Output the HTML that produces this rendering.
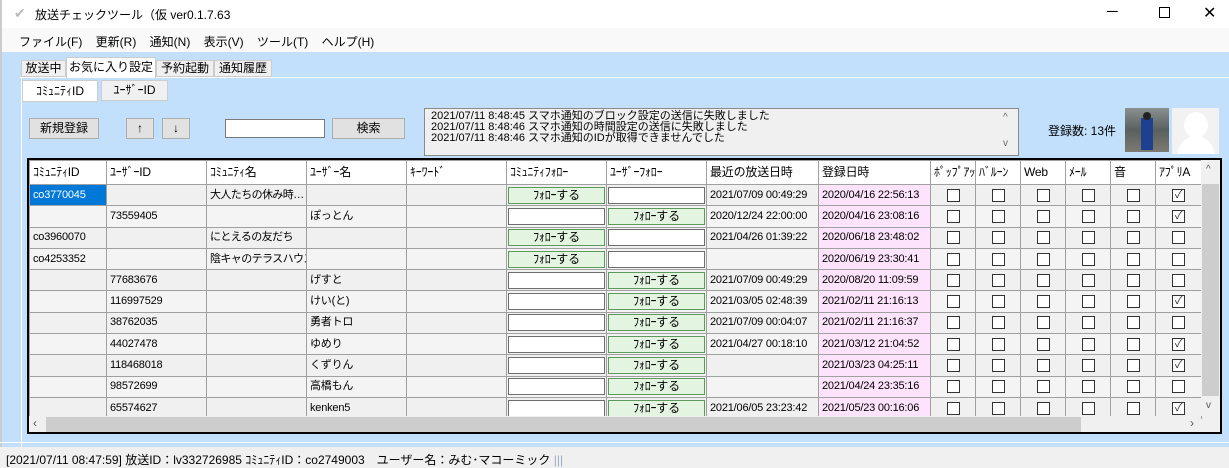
<!DOCTYPE html>
<html><head><meta charset="utf-8"><style>
*{box-sizing:border-box;margin:0;padding:0}
body{width:1229px;height:468px;overflow:hidden;background:#c2e0fc;font-family:"Liberation Sans","Noto Sans CJK JP",sans-serif;font-size:12px;color:#000;position:relative}
.a{position:absolute;white-space:nowrap}
.btn{position:absolute;background:#e1e1e1;border:1px solid #adadad;text-align:center;font-size:12px;line-height:19px}
table{border-collapse:collapse;table-layout:fixed;position:absolute;left:29px;top:160px;width:1172px}
td{border:1px solid #a0a0a0;height:21.3px;padding:0 3px;white-space:nowrap;overflow:hidden;font-size:11px;line-height:19px;vertical-align:middle;font-family:"Liberation Sans","Noto Sans CJK JP",sans-serif;letter-spacing:-0.2px}
tr.h td{height:24px;font-size:12px;background:#fff}
tr:nth-child(odd):not(.h) td{background:#f4f4f4}
td.p{background:#fde3fb!important}
td.n{letter-spacing:-0.6px}
.gb{display:block;height:17px;border:1px solid #5c9a5c;background:#e3f5e1;text-align:center;line-height:15px;font-size:12px}
.wb{display:block;height:17px;border:1px solid #6e6e6e;background:#fff}
.cb{display:block;width:13px;height:13px;border:1px solid #333;margin:0 auto;background:#fff;font-size:11px;line-height:11px;text-align:center;color:#333;font-style:normal}
td.c{padding:0 1px}
</style></head><body>
<div class="a" style="left:0;top:0;width:1229px;height:28px;background:#fff"></div>
<div class="a" style="left:14px;top:5px;font-size:14px;color:#bbb">✔</div>
<div class="a" style="left:35px;top:6px;font-size:12px">放送チェックツール（仮 ver0.1.7.63</div>
<div class="a" style="left:1107px;top:3px;font-size:15px">─</div>
<div class="a" style="left:1159px;top:7px;width:11px;height:11px;border:1px solid #000"></div>
<div class="a" style="left:1203px;top:3px;font-size:16px">✕</div>
<div class="a" style="left:0;top:28px;width:1229px;height:24px;background:#f9f9f9"></div>
<div class="a" style="left:19px;top:33px;font-size:12px">ファイル(F)&nbsp;&nbsp;&nbsp;&nbsp;更新(R)&nbsp;&nbsp;&nbsp;&nbsp;通知(N)&nbsp;&nbsp;&nbsp;&nbsp;表示(V)&nbsp;&nbsp;&nbsp;&nbsp;ツール(T)&nbsp;&nbsp;&nbsp;&nbsp;ヘルプ(H)</div>
<div class="a" style="left:0;top:0;width:2px;height:468px;background:#ccc"></div>
<div class="a" style="left:20px;top:77px;width:1209px;height:1px;background:#fff"></div>
<div class="a" style="left:21px;top:60px;width:45px;height:17px;background:#f0f0f0;border:1px solid #ccc;text-align:center;line-height:15px">放送中</div>
<div class="a" style="left:66px;top:57px;width:90px;height:21px;background:#fff;border:1px solid #ccc;border-bottom:none;text-align:center;line-height:18px">お気に入り設定</div>
<div class="a" style="left:156px;top:60px;width:58px;height:17px;background:#f0f0f0;border:1px solid #ccc;text-align:center;line-height:15px">予約起動</div>
<div class="a" style="left:214px;top:60px;width:58px;height:17px;background:#f0f0f0;border:1px solid #ccc;text-align:center;line-height:15px">通知履歴</div>
<div class="a" style="left:21px;top:78px;width:1px;height:370px;background:#fff"></div>
<div class="a" style="left:22px;top:80px;width:76px;height:22px;background:#fff;border:1px solid #ccc;text-align:center;line-height:20px;font-size:12px">ｺﾐｭﾆﾃｨID</div>
<div class="a" style="left:101px;top:80px;width:67px;height:21px;background:#f0f0f0;border:1px solid #ccc;text-align:center;line-height:19px;font-size:12px">ﾕｰｻﾞｰID</div>
<div class="btn" style="left:29px;top:118px;width:70px;height:21px">新規登録</div>
<div class="btn" style="left:126px;top:118px;width:28px;height:21px">↑</div>
<div class="btn" style="left:162px;top:118px;width:28px;height:21px">↓</div>
<div class="a" style="left:225px;top:119px;width:100px;height:19px;background:#fff;border:1px solid #7a7a7a"></div>
<div class="btn" style="left:332px;top:118px;width:73px;height:21px">検索</div>
<div class="a" style="left:424px;top:108px;width:595px;height:48px;background:#f0f0f0;border:1px solid #8a8a8a;padding:2px 0 0 6px;font-size:11px;line-height:11px">2021/07/11 8:48:45 スマホ通知のブロック設定の送信に失敗しました<br>2021/07/11 8:48:46 スマホ通知の時間設定の送信に失敗しました<br>2021/07/11 8:48:46 スマホ通知のIDが取得できませんでした</div>
<div class="a" style="left:1003px;top:112px;font-size:10px;color:#666">^</div>
<div class="a" style="left:1003px;top:138px;font-size:10px;color:#666">v</div>
<div class="a" style="left:1048px;top:122px;font-size:12px">登録数: 13件</div>
<div class="a" style="left:1125px;top:108px;width:44px;height:44px;background:linear-gradient(#8a8f8f,#5a6060 50%,#7c7a70)"></div>
<div class="a" style="left:1141px;top:118px;width:12px;height:32px;background:#1f3f8f"></div>
<div class="a" style="left:1143px;top:112px;width:8px;height:8px;background:#222;border-radius:50%"></div>
<div class="a" style="left:1172px;top:108px;width:47px;height:46px;background:#f2f2f2;overflow:hidden"><div style="position:absolute;left:12px;top:4px;width:24px;height:26px;background:#fff;border-radius:50%"></div><div style="position:absolute;left:6px;top:28px;width:36px;height:20px;background:#fff;border-radius:18px 18px 0 0"></div></div>
<div class="a" style="left:27px;top:158px;width:1195px;height:276px;background:#f0f0f0;border:2px solid #000"></div>
<table>
<colgroup><col style="width:77px"><col style="width:100px"><col style="width:100px"><col style="width:100px"><col style="width:100px"><col style="width:100px"><col style="width:100px"><col style="width:112px"><col style="width:112px"><col style="width:45px"><col style="width:45px"><col style="width:45px"><col style="width:45px"><col style="width:45px"><col style="width:46px"></colgroup>
<tr class="h"><td>ｺﾐｭﾆﾃｨID</td><td>ﾕｰｻﾞｰID</td><td>ｺﾐｭﾆﾃｨ名</td><td>ﾕｰｻﾞｰ名</td><td>ｷｰﾜｰﾄﾞ</td><td>ｺﾐｭﾆﾃｨﾌｫﾛｰ</td><td>ﾕｰｻﾞｰﾌｫﾛｰ</td><td>最近の放送日時</td><td>登録日時</td><td>ﾎﾟｯﾌﾟｱｯﾌﾟ</td><td>ﾊﾞﾙｰﾝ</td><td>Web</td><td>ﾒｰﾙ</td><td>音</td><td>ｱﾌﾟﾘA</td></tr>
<tr><td style="background:#0078d7;color:#fff">co3770045</td><td></td><td class="n">大人たちの休み時…</td><td></td><td></td><td class="c"><span class="gb">ﾌｫﾛｰする</span></td><td class="c"><span class="wb"></span></td><td>2021/07/09 00:49:29</td><td class="p">2020/04/16 22:56:13</td><td><i class="cb"></i></td><td><i class="cb"></i></td><td><i class="cb"></i></td><td><i class="cb"></i></td><td><i class="cb"></i></td><td><i class="cb">✓</i></td></tr>
<tr><td></td><td>73559405</td><td></td><td>ぽっとん</td><td></td><td class="c"><span class="wb"></span></td><td class="c"><span class="gb">ﾌｫﾛｰする</span></td><td>2020/12/24 22:00:00</td><td class="p">2020/04/16 23:08:16</td><td><i class="cb"></i></td><td><i class="cb"></i></td><td><i class="cb"></i></td><td><i class="cb"></i></td><td><i class="cb"></i></td><td><i class="cb">✓</i></td></tr>
<tr><td>co3960070</td><td></td><td class="n">にとえるの友だち</td><td></td><td></td><td class="c"><span class="gb">ﾌｫﾛｰする</span></td><td class="c"><span class="wb"></span></td><td>2021/04/26 01:39:22</td><td class="p">2020/06/18 23:48:02</td><td><i class="cb"></i></td><td><i class="cb"></i></td><td><i class="cb"></i></td><td><i class="cb"></i></td><td><i class="cb"></i></td><td><i class="cb"></i></td></tr>
<tr><td>co4253352</td><td></td><td class="n">陰キャのテラスハウス</td><td></td><td></td><td class="c"><span class="gb">ﾌｫﾛｰする</span></td><td class="c"><span class="wb"></span></td><td></td><td class="p">2020/06/19 23:30:41</td><td><i class="cb"></i></td><td><i class="cb"></i></td><td><i class="cb"></i></td><td><i class="cb"></i></td><td><i class="cb"></i></td><td><i class="cb"></i></td></tr>
<tr><td></td><td>77683676</td><td></td><td>げすと</td><td></td><td class="c"><span class="wb"></span></td><td class="c"><span class="gb">ﾌｫﾛｰする</span></td><td>2021/07/09 00:49:29</td><td class="p">2020/08/20 11:09:59</td><td><i class="cb"></i></td><td><i class="cb"></i></td><td><i class="cb"></i></td><td><i class="cb"></i></td><td><i class="cb"></i></td><td><i class="cb"></i></td></tr>
<tr><td></td><td>116997529</td><td></td><td>けい(と)</td><td></td><td class="c"><span class="wb"></span></td><td class="c"><span class="gb">ﾌｫﾛｰする</span></td><td>2021/03/05 02:48:39</td><td class="p">2021/02/11 21:16:13</td><td><i class="cb"></i></td><td><i class="cb"></i></td><td><i class="cb"></i></td><td><i class="cb"></i></td><td><i class="cb"></i></td><td><i class="cb">✓</i></td></tr>
<tr><td></td><td>38762035</td><td></td><td>勇者トロ</td><td></td><td class="c"><span class="wb"></span></td><td class="c"><span class="gb">ﾌｫﾛｰする</span></td><td>2021/07/09 00:04:07</td><td class="p">2021/02/11 21:16:37</td><td><i class="cb"></i></td><td><i class="cb"></i></td><td><i class="cb"></i></td><td><i class="cb"></i></td><td><i class="cb"></i></td><td><i class="cb"></i></td></tr>
<tr><td></td><td>44027478</td><td></td><td>ゆめり</td><td></td><td class="c"><span class="wb"></span></td><td class="c"><span class="gb">ﾌｫﾛｰする</span></td><td>2021/04/27 00:18:10</td><td class="p">2021/03/12 21:04:52</td><td><i class="cb"></i></td><td><i class="cb"></i></td><td><i class="cb"></i></td><td><i class="cb"></i></td><td><i class="cb"></i></td><td><i class="cb">✓</i></td></tr>
<tr><td></td><td>118468018</td><td></td><td>くずりん</td><td></td><td class="c"><span class="wb"></span></td><td class="c"><span class="gb">ﾌｫﾛｰする</span></td><td></td><td class="p">2021/03/23 04:25:11</td><td><i class="cb"></i></td><td><i class="cb"></i></td><td><i class="cb"></i></td><td><i class="cb"></i></td><td><i class="cb"></i></td><td><i class="cb">✓</i></td></tr>
<tr><td></td><td>98572699</td><td></td><td>高橋もん</td><td></td><td class="c"><span class="wb"></span></td><td class="c"><span class="gb">ﾌｫﾛｰする</span></td><td></td><td class="p">2021/04/24 23:35:16</td><td><i class="cb"></i></td><td><i class="cb"></i></td><td><i class="cb"></i></td><td><i class="cb"></i></td><td><i class="cb"></i></td><td><i class="cb"></i></td></tr>
<tr><td></td><td>65574627</td><td></td><td>kenken5</td><td></td><td class="c"><span class="wb"></span></td><td class="c"><span class="gb">ﾌｫﾛｰする</span></td><td>2021/06/05 23:23:42</td><td class="p">2021/05/23 00:16:06</td><td><i class="cb"></i></td><td><i class="cb"></i></td><td><i class="cb"></i></td><td><i class="cb"></i></td><td><i class="cb"></i></td><td><i class="cb">✓</i></td></tr>
</table>
<div class="a" style="left:1201px;top:160px;width:19px;height:256px;background:#f0f0f0"></div>
<div class="a" style="left:1202px;top:184px;width:17px;height:212px;background:#cdcdcd"></div>
<div class="a" style="left:1206px;top:164px;font-size:10px;color:#555">^</div>
<div class="a" style="left:1206px;top:400px;font-size:10px;color:#555">v</div>
<div class="a" style="left:29px;top:416px;width:1172px;height:16px;background:#f0f0f0"></div>
<div class="a" style="left:46px;top:417px;width:1035px;height:15px;background:#cdcdcd"></div>
<div class="a" style="left:33px;top:416px;font-size:12px;color:#555">‹</div>
<div class="a" style="left:1190px;top:416px;font-size:12px;color:#555">›</div>
<div class="a" style="left:0;top:442px;width:1229px;height:1px;background:#fff"></div>
<div class="a" style="left:0;top:447px;width:1229px;height:21px;background:#f0f0f0;padding:4px 0 0 6px;font-size:12px">[2021/07/11 08:47:59] 放送ID：lv332726985 ｺﾐｭﾆﾃｨID：co2749003　ユーザー名：みむ･マコーミック <span style="color:#9ac">|||</span></div>
</body></html>
